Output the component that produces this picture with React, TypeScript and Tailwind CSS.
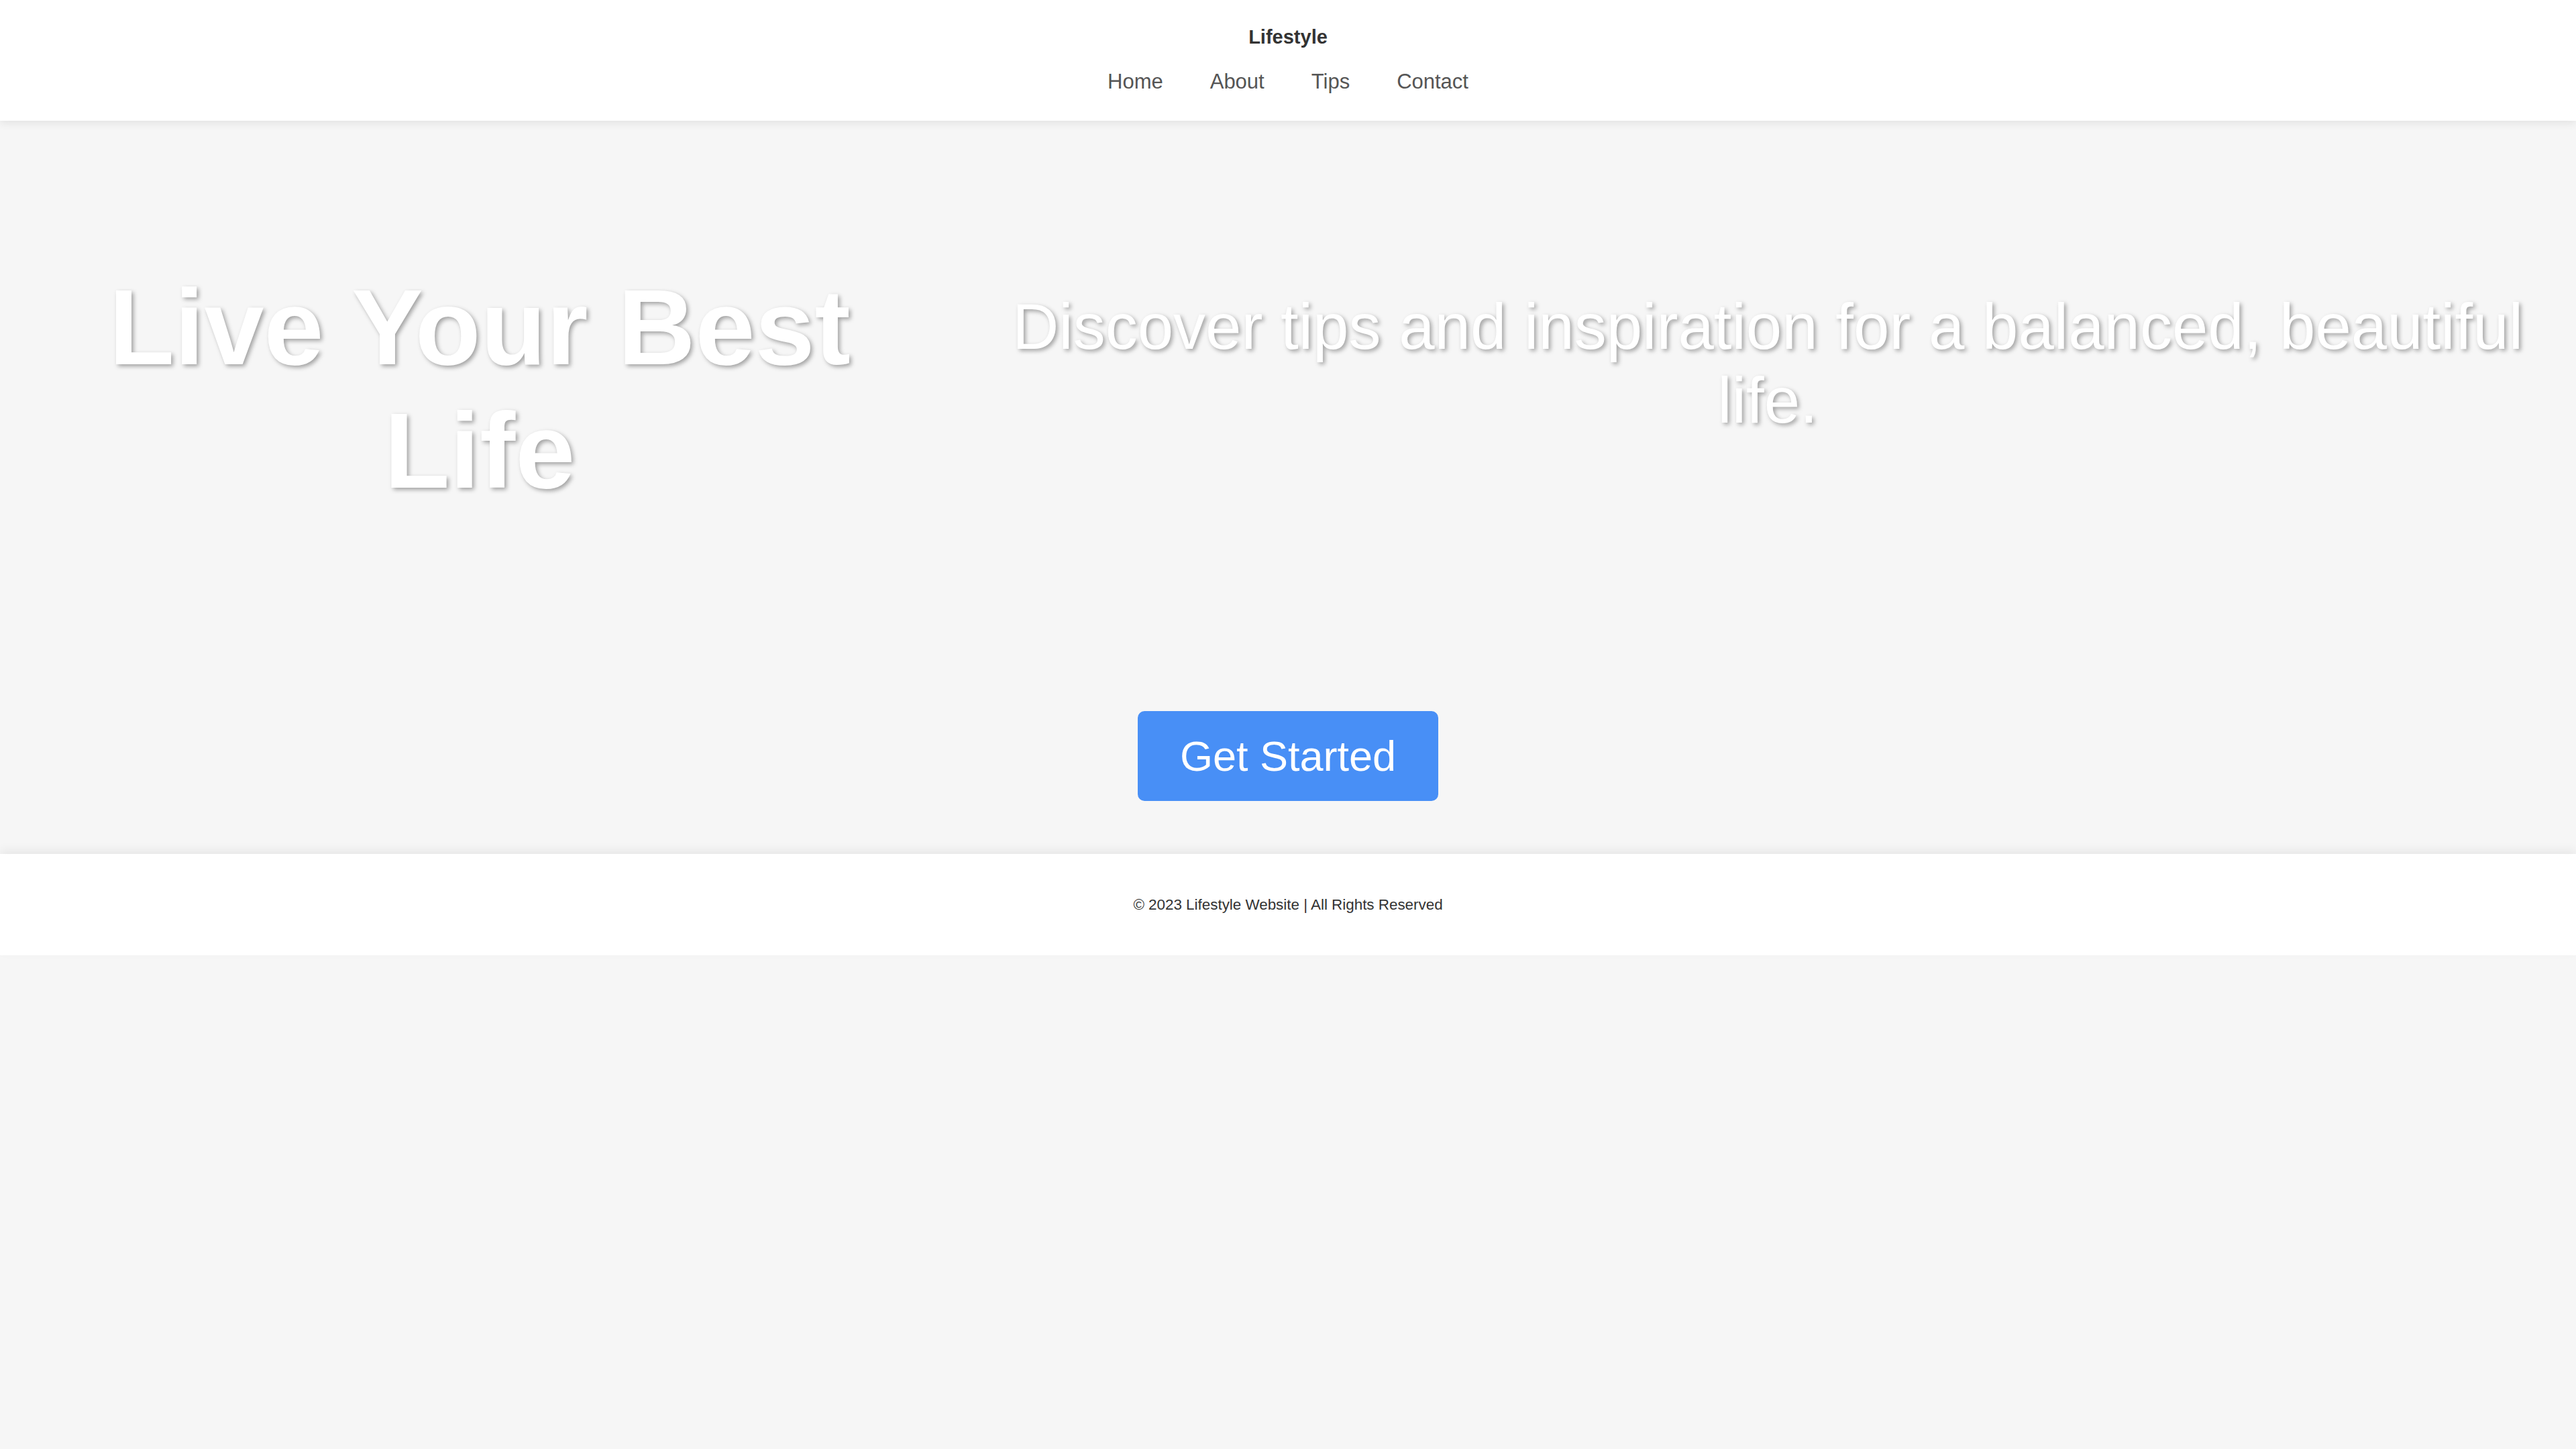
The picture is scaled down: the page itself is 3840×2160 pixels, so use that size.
import React from 'react';

const navItems = ['Home', 'About', 'Tips', 'Contact'];

export default function App() {
  return (
    <div className="min-h-screen bg-[#f6f6f6] font-['Liberation_Sans',Arial,sans-serif]">
      <header className="relative z-10 h-[180px] bg-white shadow-[0_4px_12px_rgba(0,0,0,0.08)] flex flex-col items-center pt-[39px]">
        <div className="text-[29px] leading-[33px] font-bold text-[#333]">Lifestyle</div>
        <nav className="mt-[32px]">
          <ul className="flex gap-[70px] text-[31px] leading-[36px] text-[#555]">
            {navItems.map((item) => (
              <li key={item}>
                <a href="#">{item}</a>
              </li>
            ))}
          </ul>
        </nav>
      </header>

      <main className="pt-[216px] pb-[79px]">
        <div className="flex items-start text-white [text-shadow:3px_3px_6px_rgba(0,0,0,0.35)]">
          <h1 className="w-[1430px] shrink-0 text-center text-[160px] leading-[184px] font-bold">
            Live Your Best Life
          </h1>
          <p className="flex-1 mt-[36px] text-center text-[96px] leading-[110px]">
            Discover tips and inspiration for a balanced, beautiful life.
          </p>
        </div>
        <div className="mt-[296px] flex justify-center">
          <button className="bg-[#488ff6] text-white text-[63px] leading-[72px] px-[63px] py-[31px] rounded-[10px]">
            Get Started
          </button>
        </div>
      </main>

      <footer className="relative bg-white shadow-[0_-6px_14px_rgba(0,0,0,0.06)] pt-[63px] pb-[62px] text-center">
        <p className="text-[22.4px] leading-[26px] text-[#333]">© 2023 Lifestyle Website | All Rights Reserved</p>
      </footer>
    </div>
  );
}
